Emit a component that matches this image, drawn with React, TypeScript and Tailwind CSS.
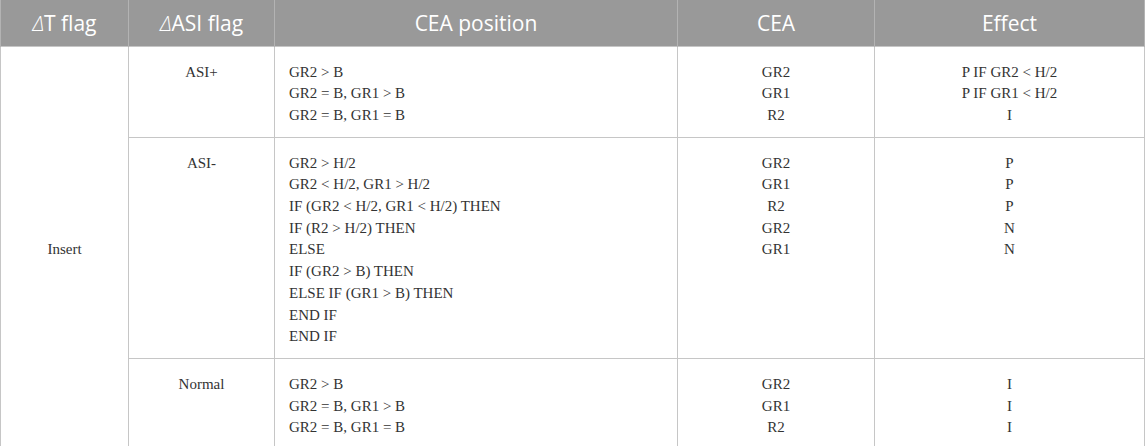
import React from 'react'

const th = 'h-[46px] border-x border-[#b3b3b3] bg-[#999999] px-3 text-center align-middle text-[21px] leading-[28px] font-normal text-white'
const td = 'border border-[#c6c6c6] px-[14px] pt-[15px] pb-[10px] align-top'

const Lines = ({ items }: { items: string[] }) => (
  <>
    {items.map((t, i) => (
      <div key={i}>{t}</div>
    ))}
  </>
)

const App = () => {
  return (
    <div className="w-[1145px] bg-white">
      <table className="w-[1144px] table-fixed border-collapse border-l border-[#c6c6c6] text-[15px] leading-[21.7px] text-[#333333] [font-family:'Liberation_Serif',serif]">
        <colgroup>
          <col className="w-[128px]" />
          <col className="w-[146px]" />
          <col className="w-[403px]" />
          <col className="w-[197px]" />
          <col className="w-[270px]" />
        </colgroup>
        <thead className="[font-family:'Open_Sans',sans-serif]">
          <tr>
            <th className={th}><i className="font-light">Δ</i>T flag</th>
            <th className={th}><i className="font-light">Δ</i>ASI flag</th>
            <th className={th}>CEA position</th>
            <th className={th}>CEA</th>
            <th className={th}>Effect</th>
          </tr>
        </thead>
        <tbody>
          <tr>
            <td rowSpan={3} className={td + ' !align-middle text-center'}>Insert</td>
            <td className={td + ' text-center'}>ASI+</td>
            <td className={td}>
              <Lines items={['GR2 > B', 'GR2 = B, GR1 > B', 'GR2 = B, GR1 = B']} />
            </td>
            <td className={td + ' text-center'}>
              <Lines items={['GR2', 'GR1', 'R2']} />
            </td>
            <td className={td + ' text-center'}>
              <Lines items={['P IF GR2 < H/2', 'P IF GR1 < H/2', 'I']} />
            </td>
          </tr>
          <tr>
            <td className={td + ' text-center'}>ASI-</td>
            <td className={td}>
              <Lines
                items={[
                  'GR2 > H/2',
                  'GR2 < H/2, GR1 > H/2',
                  'IF (GR2 < H/2, GR1 < H/2) THEN',
                  'IF (R2 > H/2) THEN',
                  'ELSE',
                  'IF (GR2 > B) THEN',
                  'ELSE IF (GR1 > B) THEN',
                  'END IF',
                  'END IF',
                ]}
              />
            </td>
            <td className={td + ' text-center'}>
              <Lines items={['GR2', 'GR1', 'R2', 'GR2', 'GR1']} />
            </td>
            <td className={td + ' text-center'}>
              <Lines items={['P', 'P', 'P', 'N', 'N']} />
            </td>
          </tr>
          <tr>
            <td className={td + ' text-center'}>Normal</td>
            <td className={td}>
              <Lines items={['GR2 > B', 'GR2 = B, GR1 > B', 'GR2 = B, GR1 = B']} />
            </td>
            <td className={td + ' text-center'}>
              <Lines items={['GR2', 'GR1', 'R2']} />
            </td>
            <td className={td + ' text-center'}>
              <Lines items={['I', 'I', 'I']} />
            </td>
          </tr>
        </tbody>
      </table>
    </div>
  )
}

export default App
